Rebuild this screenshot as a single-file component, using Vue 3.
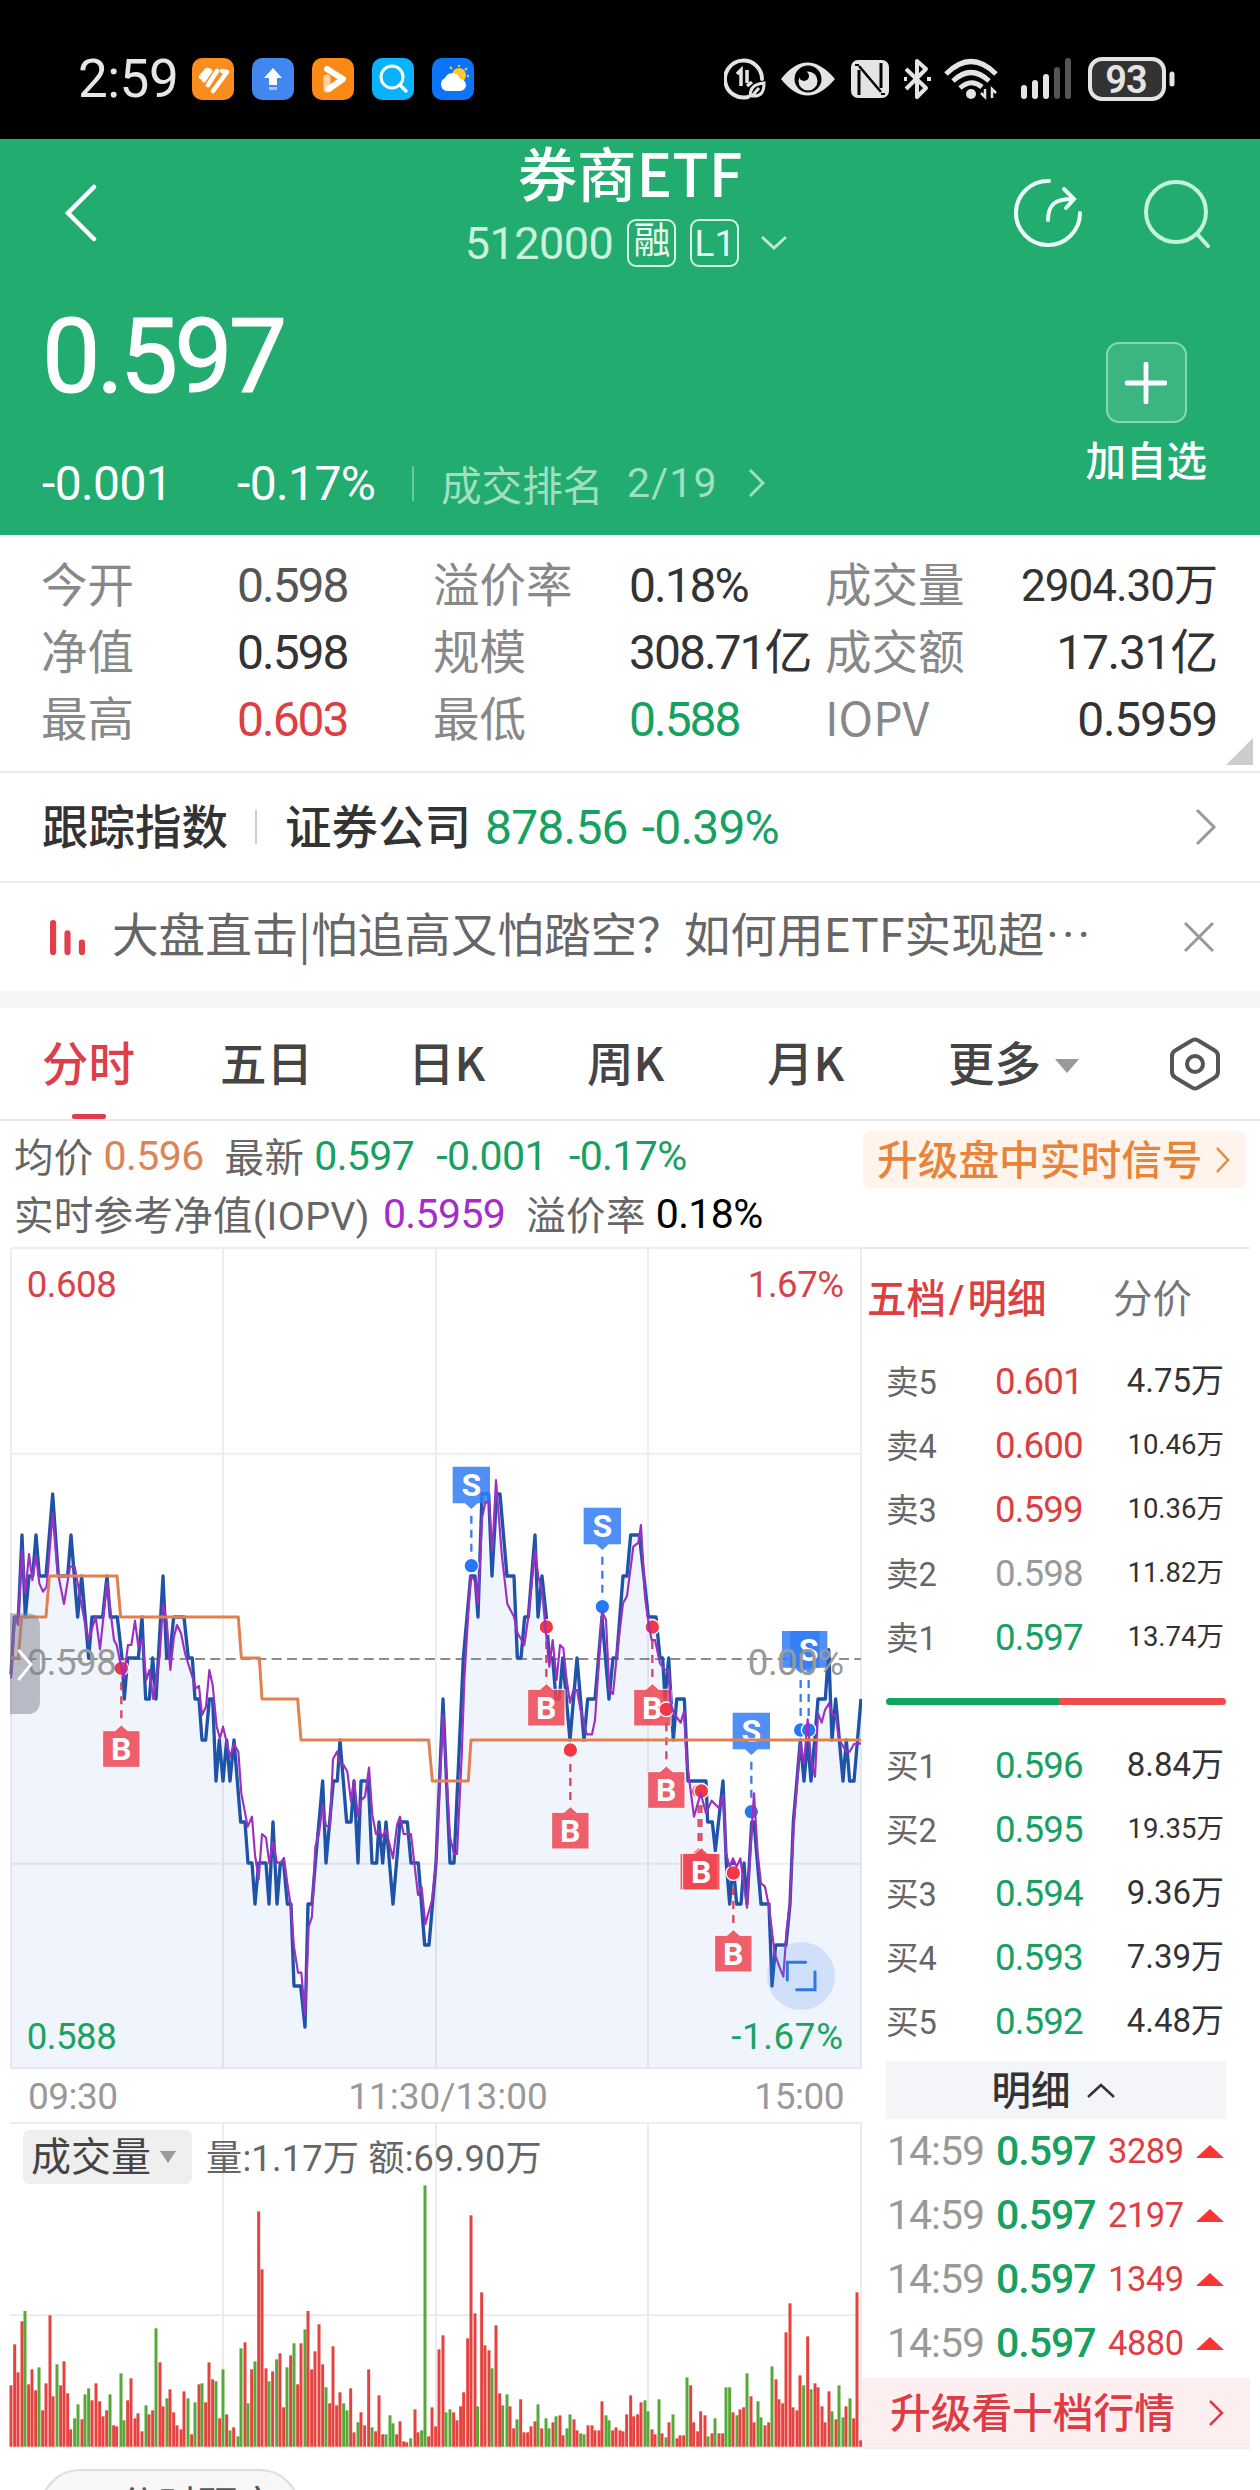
<template>
    <div class="page">
        <div class="status-bar">
            <div class="status-left">
                <span class="clock">2:59</span>
                <svg v-for="app in apps" :key="app" class="app-icon" viewBox="0 0 42 42">
                    <template v-if="app === 'notes'">
                        <rect width="42" height="42" rx="10" fill="#fb8c1e" />
                        <path d="M9 19 L15 12 L18 13 L12 22 M16 27 L25 13 M21 33 L35 14 L30 13" fill="none" stroke="#fff" stroke-width="4.6" stroke-linecap="round" stroke-linejoin="round" />
                    </template>
                    <template v-else-if="app === 'upload'">
                        <rect width="42" height="42" rx="10" fill="#4286ef" />
                        <path d="M21 10 L30 20 H25 V27 H17 V20 H12 Z" fill="#fff" />
                        <rect x="17" y="29" width="8" height="3" fill="#9fc1f8" />
                    </template>
                    <template v-else-if="app === 'video'">
                        <rect width="42" height="42" rx="10" fill="#fb8916" />
                        <path d="M15 31 V20" stroke="#ffd3a8" stroke-width="7" stroke-linecap="round" />
                        <path d="M15 11 L31 21 L17 31" fill="none" stroke="#fff" stroke-width="6" stroke-linecap="round" stroke-linejoin="round" />
                    </template>
                    <template v-else-if="app === 'search'">
                        <rect width="42" height="42" rx="10" fill="#0ab2fb" />
                        <circle cx="20" cy="19" r="11" fill="none" stroke="#fff" stroke-width="3" />
                        <path d="M28 27 L34 33" stroke="#fff" stroke-width="3.5" stroke-linecap="round" />
                    </template>
                    <template v-else>
                        <rect width="42" height="42" rx="10" fill="#0a75fb" />
                        <path d="M27 7 V9 M18 9 L20 11 M35 10 L33 12 M37 18 H35" stroke="#ffc62e" stroke-width="2" />
                        <circle cx="27" cy="17" r="7" fill="#ffc62e" />
                        <path d="M14 33 a7 7 0 0 1 -1 -13 a8 8 0 0 1 15 1 a6 6 0 0 1 0 12 Z" fill="#fff" />
                    </template>
                </svg>
            </div>
            <svg class="status-icons" viewBox="0 0 452 46" fill="none" stroke="#e4e4e4">
                <path d="M24 41 A18.5 18.5 0 1 1 38 23" stroke-width="4" stroke-linecap="round" />
                <path d="M13 18 L17 14 V30 M23 14 V27 M23 30 L28 26" stroke-width="3.5" />
                <path d="M26 41 C26 31 31 28 40 27 C40 36 37 41 28 40 L35 32" stroke-width="3" />
                <path d="M57 23 Q83 -10 111 23 Q83 56 57 23 Z" fill="#e4e4e4" stroke="none" />
                <circle cx="84" cy="23" r="13.5" fill="#000" stroke="none" />
                <circle cx="84" cy="25" r="9.5" fill="#e4e4e4" stroke="none" />
                <circle cx="80" cy="20" r="5" fill="#000" stroke="none" />
                <rect x="127" y="4" width="38" height="38" rx="7" fill="#e4e4e4" stroke="none" />
                <path d="M135 39 V14 M157 32 V7" stroke="#000" stroke-width="3" />
                <path d="M135 10 L157 36" stroke="#000" stroke-width="2.5" />
                <path d="M131 9 L135 9 M157 38 L161 38" stroke="#000" stroke-width="2" />
                <path d="M182 13 L202 32 L193 41 V5 L202 13 L182 33" stroke-width="4" stroke-linejoin="round" />
                <path d="M180 23 h3 M203 23 h4" stroke-width="4" />
                <path d="M222 18 Q247 -7 272 18" stroke-width="5" />
                <path d="M229 25 Q247 8 265 25" stroke-width="5" />
                <path d="M236 32 Q247 22 258 31" stroke-width="5" />
                <circle cx="247" cy="38" r="5" fill="#e4e4e4" stroke="none" />
                <path d="M261 33 V41 L257 37 M268 42 V33 L272 37" stroke-width="2.5" />
                <path d="M300 40 V32 M311 40 V27 M322 40 V21" stroke-width="6" stroke-linecap="round" />
                <path d="M333 40 V14 M344 40 V5" stroke="#555" stroke-width="6" stroke-linecap="round" />
                <rect x="366" y="3" width="74" height="40" rx="12" fill="#333" stroke-width="4" />
                <path d="M448 18 V28" stroke-width="5" stroke-linecap="round" />
                <text x="402" y="37" text-anchor="middle" class="battery">93</text>
            </svg>
        </div>

        <header class="header">
            <div class="nav">
                <svg class="back" viewBox="0 0 34 58"><path d="M30 3 L4 29 L30 55" fill="none" stroke="#fff" stroke-width="4.5" stroke-linecap="round" /></svg>
                <div class="title-block">
                    <div class="title">券商ETF</div>
                    <div class="subtitle">
                        <span class="code">512000</span>
                        <span class="badge">融</span>
                        <span class="badge badge-l1">L1</span>
                        <svg class="sub-arrow" viewBox="0 0 28 16"><path d="M2 2 L14 13 L26 2" fill="none" stroke="#b9ecd3" stroke-width="3" /></svg>
                    </div>
                </div>
                <svg class="share" viewBox="0 0 70 70" fill="none" stroke="#eafff5" stroke-width="4" stroke-linecap="round">
                    <path d="M35 3 A32 32 0 1 0 66 35" />
                    <path d="M34 42 C34 26 42 21 58 21 M50 11 L60 21 L52 30" />
                </svg>
                <svg class="search" viewBox="0 0 70 70" fill="none" stroke="#c3f3dc" stroke-width="4" stroke-linecap="round">
                    <circle cx="34" cy="34" r="30" />
                    <path d="M56 57 L66 68" />
                </svg>
            </div>
            <div class="quote">
                <div>
                    <div class="price">0.597</div>
                    <div class="change-row">
                        <span class="chg">-0.001</span>
                        <span class="pct">-0.17%</span>
                        <span class="bar"></span>
                        <span class="rank">成交排名</span>
                        <span class="rank-no">2/19</span>
                        <svg class="rank-arrow" viewBox="0 0 18 30"><path d="M2 2 L15 15 L2 28" fill="none" stroke="#9fdfc2" stroke-width="3" /></svg>
                    </div>
                </div>
                <div class="add">
                    <div class="add-box">
                        <svg viewBox="0 0 44 44"><path d="M22 2 V42 M2 22 H42" stroke="#fff" stroke-width="5" stroke-linecap="round" /></svg>
                    </div>
                    <div class="add-text">加自选</div>
                </div>
            </div>
        </header>

        <section class="stats">
            <template v-for="s in stats" :key="s.label">
                <span class="label">{{ s.label }}</span>
                <span class="value" :class="[s.color, { right: s.right, small: s.small }]">{{ s.value }}</span>
            </template>
            <i class="corner"></i>
        </section>

        <section class="index-row">
            <span class="name">跟踪指数</span>
            <i class="bar"></i>
            <span class="name">证券公司</span>
            <span class="num green">878.56</span>
            <span class="num green">-0.39%</span>
            <svg class="arrow" viewBox="0 0 22 38"><path d="M2 2 L19 19 L2 36" fill="none" stroke="#999" stroke-width="3" /></svg>
        </section>

        <section class="news-row">
            <svg class="news-icon" viewBox="0 0 34 34"><path d="M3 3 V31 M17 13 V31 M31 22 V31" stroke="#e0404a" stroke-width="6" stroke-linecap="round" /></svg>
            <span class="news-text">大盘直击|怕追高又怕踏空？如何用ETF实现超<span class="dots">···</span></span>
            <svg class="close" viewBox="0 0 32 32"><path d="M2 2 L30 30 M30 2 L2 30" stroke="#999" stroke-width="3" /></svg>
        </section>

        <nav class="tabs">
            <span v-for="(t, i) in tabs" :key="t" class="tab" :class="{ active: i === 0 }">{{ t }}</span>
            <i class="caret"></i>
            <svg class="hex" viewBox="0 0 50 54" fill="none" stroke="#555" stroke-width="4" stroke-linejoin="round">
                <path d="M21 4 Q25 1 29 4 L44 13 Q48 15 48 19 V35 Q48 39 44 41 L29 50 Q25 53 21 50 L6 41 Q2 39 2 35 V19 Q2 15 6 13 Z" />
                <circle cx="25" cy="27" r="8" />
            </svg>
        </nav>

        <section class="info">
            <div class="info-left">
                <div class="info-line">
                    <span>均价</span><b class="orange">0.596</b>
                    <span class="gap">最新</span><b class="green">0.597</b>
                    <b class="green gap2">-0.001</b><b class="green gap2">-0.17%</b>
                </div>
                <div class="info-line">
                    <span>实时参考净值(IOPV)</span><b class="purple">0.5959</b>
                    <span class="gap">溢价率</span><b class="black">0.18%</b>
                </div>
            </div>
            <div class="signal">
                <span>升级盘中实时信号</span>
                <svg viewBox="0 0 16 28"><path d="M2 2 L13 14 L2 26" fill="none" stroke="#e48a45" stroke-width="2.5" /></svg>
            </div>
        </section>

        <main class="main">
            <div class="charts">
                <!-- intraday price chart -->
                <svg class="price-chart" viewBox="0 -1269 2586 2469">
                    <path :d="areaPath" fill="#eff4fd" />
                    <path
                        d="M33 -1266 H2583 M33 -649 H2583 M33 581 H2583 M33 1195 H2583 M33 -1266 V1195 M669 -1266 V1195 M1308 -1266 V1195 M1944 -1266 V1195 M2583 -1266 V1195"
                        stroke="#7b8494" stroke-opacity="0.15" stroke-width="6" fill="none"
                    />
                    <path d="M33 -33 H2583" stroke="#8c8c8c" stroke-width="6" stroke-dasharray="30 16" />
                    <polyline :points="pricePoints" fill="none" stroke="#1e53a8" stroke-width="10" stroke-linejoin="round" />
                    <g v-for="(m, i) in markers" :key="i">
                        <line :x1="m.x" :x2="m.x" :y1="m.y" :y2="m.type === 'S' ? m.y - 160 : m.y + 160" :stroke="m.type === 'S' ? '#3a7fe6' : '#d9455a'" stroke-width="7" stroke-dasharray="24 18" />
                        <g opacity="0.85">
                            <path v-if="m.type === 'S'" :d="`M${m.x - 56} ${m.y - 297} h112 v110 h-37 l-19 17 l-19 -17 h-37 z`" fill="#317df5" />
                            <path v-else :d="`M${m.x - 56} ${m.y + 187} h37 l19 -17 l19 17 h37 v110 h-112 z`" fill="#ee4552" stroke="#fff" stroke-width="3" />
                        </g>
                        <text v-if="!m.under" :x="m.x" :y="m.type === 'S' ? m.y - 208 : m.y + 275" text-anchor="middle" class="marker-text">{{ m.type }}</text>
                        <circle :cx="m.x" :cy="m.y" r="22" :fill="m.type === 'S' ? '#2478f5' : '#f23645'" stroke="#fff" stroke-width="4" />
                    </g>
                    <polyline :points="iopvPoints" fill="none" stroke="#9c30c0" stroke-width="6.5" stroke-linejoin="round" />
                    <polyline :points="avgPoints" fill="none" stroke="#e08250" stroke-width="9" stroke-linejoin="round" />
                    <g class="chart-label">
                        <text x="80" y="-1120" fill="#d8434b">0.608</text>
                        <text x="80" y="15" fill="#999">0.598</text>
                        <text x="80" y="1137" fill="#1aa361">0.588</text>
                        <text x="2531" y="-1120" text-anchor="end" fill="#d8434b">1.67%</text>
                        <text x="2531" y="15" text-anchor="end" fill="#999">0.00%</text>
                        <text x="2531" y="1137" text-anchor="end" fill="#1aa361" class="wide">-1.67%</text>
                    </g>
                    <circle cx="2403" cy="918" r="102" fill="#4285f4" fill-opacity="0.18" />
                    <path d="M2417 877 H2362 V930 M2445 905 V959 H2390" fill="none" stroke="#2f78e3" stroke-width="9" stroke-linecap="round" />
                    <path d="M30 -170 H80 Q120 -170 120 -130 V92 Q120 132 80 132 H30 Z" fill="#7d828d" fill-opacity="0.5" />
                    <path d="M55 -60 L93 -17 L55 30" fill="none" stroke="#fff" stroke-width="9" />
                </svg>
                <div class="axis">
                    <span>09:30</span>
                    <span class="mid">11:30/13:00</span>
                    <span>15:00</span>
                </div>
                <!-- volume chart -->
                <div class="volume">
                    <svg class="volume-chart" viewBox="0 38 2586 978">
                        <path d="M30 40 H2583 M30 618 H2583 M30 1013 H2583 M669 38 V1012 M1308 38 V1012 M1944 38 V1012 M2583 38 V1012" stroke="#ebebeb" stroke-width="6" fill="none" />
                        <rect v-for="b in bars" :key="b.x" :x="b.x - 4.5" :y="b.y" width="9" :height="1012 - b.y" :fill="b.up ? '#e5433f' : '#57a838'" />
                    </svg>
                    <div class="volume-head">
                        <span class="volume-tag">成交量<i></i></span>
                        <span class="volume-text">量:1.17万 额:69.90万</span>
                    </div>
                </div>
            </div>

            <aside class="side">
                <div class="side-tabs">
                    <span class="red">五档<span class="slash">/</span>明细</span>
                    <span>分价</span>
                </div>
                <div v-for="o in asks" :key="o[0]" class="order">
                    <span>{{ o[0] }}</span>
                    <b :class="o[3]">{{ o[1] }}</b>
                    <em :class="{ long: o[2].length > 5 }">{{ o[2] }}</em>
                </div>
                <div class="ratio"><i></i></div>
                <div v-for="o in bids" :key="o[0]" class="order">
                    <span>{{ o[0] }}</span>
                    <b :class="o[3]">{{ o[1] }}</b>
                    <em :class="{ long: o[2].length > 5 }">{{ o[2] }}</em>
                </div>
                <div class="detail-head">
                    <span>明细</span>
                    <svg viewBox="0 0 28 15"><path d="M1 14 L14 2 L27 14" fill="none" stroke="#333" stroke-width="2.5" /></svg>
                </div>
                <div v-for="(d, i) in details" :key="i" class="deal">
                    <span>14:59</span>
                    <b>0.597</b>
                    <em>{{ d }}</em>
                    <i></i>
                </div>
                <div class="upgrade">
                    <span>升级看十档行情</span>
                    <svg viewBox="0 0 16 28"><path d="M2 2 L14 14 L2 26" fill="none" stroke="#dc3c46" stroke-width="2.5" /></svg>
                </div>
            </aside>
        </main>

        <div class="bottom">
            <div class="pill">分时研究</div>
        </div>
    </div>
</template>

<script setup>
const apps = ['notes', 'upload', 'video', 'search', 'weather'];

const stats = [
    { label: '今开', value: '0.598', color: 'gray' },
    { label: '溢价率', value: '0.18%' },
    { label: '成交量', value: '2904.30万', right: true, small: true },
    { label: '净值', value: '0.598' },
    { label: '规模', value: '308.71亿' },
    { label: '成交额', value: '17.31亿', right: true },
    { label: '最高', value: '0.603', color: 'red' },
    { label: '最低', value: '0.588', color: 'green' },
    { label: 'IOPV', value: '0.5959', right: true },
];

const tabs = ['分时', '五日', '日K', '周K', '月K', '更多'];

const asks = [
    ['卖5', '0.601', '4.75万', 'red'],
    ['卖4', '0.600', '10.46万', 'red'],
    ['卖3', '0.599', '10.36万', 'red'],
    ['卖2', '0.598', '11.82万', 'flat'],
    ['卖1', '0.597', '13.74万', 'green'],
];

const bids = [
    ['买1', '0.596', '8.84万', 'green'],
    ['买2', '0.595', '19.35万', 'green'],
    ['买3', '0.594', '9.36万', 'green'],
    ['买4', '0.593', '7.39万', 'green'],
    ['买5', '0.592', '4.48万', 'green'],
];

const details = [3289, 2197, 1349, 4880];

// x, price offset from 0.598 in steps of 0.001
const price = `33,-.4 43,1 55,1 66,3 76,1 87,2 98,2 108,3 118,2 138,2 158,4 175,2 203,2 213,3 233,1 245,2 266,0 276,1 308,1
321,2 331,1 352,1 366,0 373,-1 383,0 415,0 426,1 437,-1 448,-1 458,0 468,-1 489,2 500,0 509,0 521,1 552,1 565,0 577,0 585,-1
597,-1 606,-2 617,-2 628,-1 638,-1 648,-3 658,-2 669,-3 680,-2 690,-3 702,-2 722,-4 735,-4 744,-5 756,-5 765,-6 776,-5
798,-5 807,-6 819,-4 831,-6 841,-5 851,-5 862,-6 873,-6 882,-8 902,-8 915,-9 924,-6 936,-6 946,-5 968,-3 978,-5 1000,-3
1012,-3 1020,-2 1040,-4 1053,-4 1062,-3 1074,-5 1083,-3 1105,-3 1116,-5 1130,-5 1137,-4 1148,-5 1158,-4 1179,-6 1200,-4
1222,-4 1233,-5 1255,-5 1274,-7 1287,-7 1308,-5 1329,-1 1350,-5 1362,-5 1390,0 1412,2 1425,2 1434,1 1446,4 1466,4 1476,2
1490,4 1500,4 1521,2 1542,2 1552,0 1563,0 1574,1 1585,1 1605,3 1614,1 1626,2 1639,1 1648,0 1658,0 1668,-1 1678,-1 1688,0
1710,-2 1731,0 1752,-2 1763,-1 1785,-1 1806,1 1827,-1 1839,0 1850,0 1869,2 1881,2 1892,3 1918,3 1945,1 1968,1 1980,0 1988,0
1995,-1 2006,0 2020,-2 2030,-1 2053,-1 2064,-3 2118,-3 2123,-4 2137,-4 2146,-4.7 2169,-3 2179,-5 2189,-6 2199,-5 2210,-6
2223,-6 2232,-5 2241,-6 2255,-4 2262,-4 2283,-6 2307,-6 2316,-8 2327,-7 2358,-7 2370,-6 2380,-4 2401,-2 2412,-3 2423,-2
2433,-3 2444,-2 2454,-1 2476,-1 2486,.2 2496,-2 2507,-1 2529,-3 2539,-2 2549,-3 2562,-3 2583,-1`;

const avg = `33,0 55,0 65,1 138,1 148,2 351,2 362,1 715,1 724,0 778,0 786,-1 893,-1 903,-2 1286,-2 1297,-3 1405,-3 1413,-2 2583,-2`;

// already in chart units
const iopvPoints = `33,25 45,-160 54,-135 66,-360 76,-230 87,-348 97,-270 108,-345 118,-260 129,-235 140,-250 158,-470 172,-300
192,-198 210,-310 224,-310 235,-250 255,-140 266,-90 287,-160 300,-62 321,-260 342,-90 350,-75 371,25 384,-75 394,-75
405,-148 415,-70 427,-90 439,30 448,0 460,87 479,-40 489,-198 500,-150 511,0 522,-100 531,-135 543,-110 555,-50 580,30
587,55 597,48 606,135 618,110 628,0 638,45 650,170 660,205 669,170 690,260 702,222 715,245 724,370 743,470 756,440 765,555
776,628 786,492 798,503 808,580 819,517 831,578 842,578 852,564 862,640 872,705 882,830 894,908 904,908 915,1035 926,770
936,740 946,530 957,490 968,405 978,468 990,468 999,268 1011,245 1020,280 1031,285 1042,305 1053,395 1062,330 1074,440
1084,390 1095,380 1107,293 1117,435 1128,492 1137,482 1148,500 1158,480 1179,565 1191,465 1200,440 1211,492 1233,492
1254,675 1265,652 1276,763 1296,690 1308,580 1329,135 1350,500 1362,552 1371,552 1385,260 1393,30 1403,-140 1412,-280
1424,-270 1434,-198 1446,-455 1456,-503 1467,-503 1477,-355 1488,-570 1505,-350 1522,-198 1542,-160 1553,-110 1573,-75
1585,-160 1605,-360 1615,-280 1626,-240 1637,-120 1648,-10 1658,-90 1670,30 1680,-75 1690,-65 1700,30 1710,98 1720,60
1731,60 1742,120 1760,193 1776,193 1785,150 1795,0 1806,-175 1818,-150 1828,60 1839,72 1850,-40 1869,-200 1881,-222
1900,-370 1915,-382 1923,-435 1935,-220 1947,-130 1955,-90 1965,-90 1980,-20 1995,0 2006,0 2012,100 2022,130 2042,158
2052,125 2060,270 2082,440 2102,370 2118,430 2135,392 2157,415 2169,375 2178,550 2189,590 2199,565 2210,590 2221,565
2241,713 2250,560 2262,370 2273,550 2283,640 2295,650 2307,710 2324,850 2338,890 2350,920 2360,780 2370,700 2380,480
2401,220 2412,280 2423,148 2433,270 2445,320 2454,130 2465,158 2475,120 2487,100 2498,135 2507,135 2518,210 2530,230
2539,245 2549,245 2562,222 2583,220`;

// x, top and direction of every one-minute bar
const volume = `33,828r 44,705r 54,789r 66,636r 75,605g 86,825r 96,780r 107,843r 117,774g 128,903r 138,822r 150,618r 159,861r
171,765g 182,828r 192,756r 203,852r 212,960r 224,927g 234,885g 246,930r 255,855g 266,837g 276,873r 288,822r 299,876r
309,921r 320,903r 330,855g 341,948r 350,951r 363,792g 372,933g 383,873r 393,807r 405,927r 414,912r 426,966r 438,888g
447,915r 458,903r 468,657g 480,759r 489,891r 501,867g 510,840r 521,909r 531,948r 543,960r 552,846r 564,867g 575,975r
585,879g 597,825r 606,822g 617,879r 627,759r 638,810r 648,816g 659,927r 669,780g 680,915r 690,963g 701,954r 714,981g
723,717g 735,699r 744,882g 755,780r 765,756g 776,306r 786,480r 798,777r 807,816g 818,786r 830,750g 840,732r 851,894r
861,774g 872,738r 882,702g 893,825r 903,702r 915,660g 924,605r 935,780r 945,726r 957,645r 968,765r 978,834g 989,882r
999,711r 1010,888r 1020,849r 1031,882g 1041,903g 1052,837r 1062,969r 1074,939g 1083,909r 1094,948r 1106,780r 1116,954g
1127,966r 1137,858r 1148,975r 1158,975g 1170,918g 1179,942g 1190,975r 1200,936r 1211,996r 1220,999r 1232,987g 1245,900r
1254,969r 1265,963g 1275,228g 1286,981r 1296,894r 1307,951r 1317,720r 1329,678r 1338,909g 1350,900g 1361,909r 1371,933r
1382,891r 1391,849r 1403,687r 1413,318r 1425,612r 1433,891g 1445,549r 1455,708r 1467,723r 1476,777g 1488,648r 1499,852r
1508,888g 1521,855g 1530,891r 1541,957r 1551,930g 1562,870r 1572,969r 1583,969r 1593,951r 1605,936r 1614,885g 1625,957r
1638,927g 1647,957g 1659,939r 1668,921g 1680,918r 1689,978r 1701,957g 1710,915g 1722,930r 1731,963r 1742,972g 1752,975g
1764,948r 1776,948r 1785,963r 1797,963r 1806,876r 1818,918g 1827,933g 1838,963r 1848,954r 1860,963r 1869,966r 1880,915r
1892,858r 1901,921r 1913,915r 1923,879r 1935,873g 1944,906g 1956,960r 1965,975r 1977,870g 1986,972r 1998,984g 2007,939r
2019,915g 2031,987r 2040,978r 2051,978r 2061,804g 2072,828r 2081,939r 2093,966r 2102,906r 2115,918r 2124,981g 2136,972r
2145,927g 2157,972r 2168,972r 2178,834g 2189,834g 2199,909r 2211,918g 2220,900r 2231,894r 2241,792g 2253,861r 2262,939r
2274,876g 2283,924g 2295,948r 2306,939r 2316,771g 2328,810r 2337,870r 2348,882r 2358,669r 2370,582r 2379,894r 2391,903r
2400,798r 2411,828g 2423,681r 2433,840g 2445,822r 2454,834r 2466,891r 2475,939r 2487,846r 2496,906g 2508,930r 2517,828g
2529,924g 2538,891r 2550,867g 2561,927r 2571,549r 2582,993r`;

const markers = [
    { type: 'B', x: 364, y: -5 },
    { type: 'S', x: 1414, y: -313 },
    { type: 'B', x: 1639, y: -129 },
    { type: 'B', x: 1711, y: 240 },
    { type: 'S', x: 1807, y: -190 },
    { type: 'B', x: 1957, y: -129 },
    { type: 'B', x: 1999, y: 118 },
    { type: 'B', x: 2096, y: 363, under: true },
    { type: 'B', x: 2104, y: 363 },
    { type: 'B', x: 2200, y: 609 },
    { type: 'S', x: 2254, y: 425 },
    { type: 'S', x: 2402, y: 180, under: true },
    { type: 'S', x: 2426, y: 180 },
];

const toPoints = (data) =>
    data
        .split(/\s+/)
        .map((item) => {
            const [x, level] = item.split(',').map(Number);
            return `${x},${(-36 - level * 123).toFixed(0)}`;
        })
        .join(' ');

const pricePoints = toPoints(price);
const avgPoints = toPoints(avg);
const areaPath = `M33 1195 L${pricePoints} L2583 1195 Z`;

const bars = volume.split(/\s+/).map((item) => {
    const [x, rest] = item.split(',');
    return { x: Number(x), y: parseInt(rest), up: rest.endsWith('r') };
});
</script>

<style>
body {
    margin: 0;
    background: #fff;
}
</style>

<style scoped>
.page {
    width: 1260px;
    height: 2490px;
    overflow: hidden;
    background: #fff;
    color: #333;
    font-family: 'Roboto', 'Noto Sans CJK SC', sans-serif;
}

svg {
    display: block;
    flex: none;
}

b,
em,
i {
    font-style: normal;
    font-weight: 400;
}

.red {
    color: #dc3f42;
}

.green {
    color: #17a160;
}

/* status bar */
.status-bar {
    height: 139px;
    box-sizing: border-box;
    padding: 18px 84px 0 78px;
    background: #000;
    display: flex;
    justify-content: space-between;
    align-items: center;
}

.status-left {
    display: flex;
    align-items: center;
    gap: 18px;
}

.clock {
    width: 96px;
    white-space: nowrap;
    font-size: 53px;
    line-height: 60px;
    letter-spacing: -0.5px;
    color: #e6e6e6;
}

.app-icon {
    width: 42px;
    height: 42px;
}

.status-icons {
    width: 452px;
    height: 46px;
}

.battery {
    font-size: 38px;
    font-weight: 600;
    letter-spacing: -1px;
    fill: #e4e4e4;
    stroke: none;
}

/* green header */
.header {
    height: 396px;
    background: #22ac6f;
    color: #fff;
}

.nav {
    height: 148px;
    padding: 0 48px 0 64px;
    display: flex;
    align-items: center;
}

.back {
    width: 34px;
    height: 58px;
}

.title-block {
    align-self: flex-start;
    flex: 1;
    margin-left: 148px;
    display: flex;
    flex-direction: column;
    align-items: center;
}

.title {
    font-family: 'Noto Sans CJK SC', sans-serif;
    font-size: 59.5px;
    font-weight: 500;
    line-height: 64px;
}

.subtitle {
    display: flex;
    align-items: center;
    height: 50px;
    margin-top: 15px;
    margin-right: 7px;
}

.code {
    font-size: 45px;
    letter-spacing: -0.5px;
    color: #c9f2df;
    margin-right: 14px;
}

.badge {
    box-sizing: border-box;
    width: 49px;
    height: 48px;
    margin-right: 14px;
    border: 2px solid #d7f5e8;
    border-radius: 9px;
    font-size: 37px;
    line-height: 42px;
    text-align: center;
    color: #eafaf3;
}

.badge-l1 {
    line-height: 45px;
}

.sub-arrow {
    width: 28px;
    height: 16px;
    margin-left: 7px;
}

.share {
    width: 70px;
    height: 70px;
    margin-right: 58px;
}

.search {
    width: 70px;
    height: 70px;
}

.quote {
    display: flex;
    justify-content: space-between;
    padding: 0 53px 0 42px;
}

.price {
    margin-top: 20px;
    height: 100px;
    font-size: 104px;
    line-height: 100px;
    letter-spacing: -4px;
    -webkit-text-stroke: 1px #fff;
}

.change-row {
    display: flex;
    align-items: center;
    height: 40px;
    margin-top: 56px;
    white-space: nowrap;
}

.chg,
.pct {
    font-size: 48px;
    letter-spacing: -0.6px;
}

.chg {
    width: 195px;
}

.pct {
    width: 175px;
}

.change-row .bar {
    width: 2px;
    height: 35px;
    background: #6bc9a0;
    margin-right: 27px;
}

.rank {
    font-size: 40.6px;
    color: #9fdfc2;
    width: 186px;
}

.rank-no {
    font-size: 41px;
    letter-spacing: 1.2px;
    color: #9fdfc2;
    width: 121px;
}

.rank-arrow {
    width: 18px;
    height: 30px;
}

.add {
    margin-top: 55px;
    display: flex;
    flex-direction: column;
    align-items: center;
}

.add-box {
    box-sizing: border-box;
    width: 81px;
    height: 81px;
    border: 2px solid #86d8b1;
    border-radius: 13px;
    background: #3bb680;
    display: flex;
    align-items: center;
    justify-content: center;
}

.add-box svg {
    width: 42px;
    height: 42px;
}

.add-text {
    margin-top: 15px;
    font-size: 40.5px;
    font-weight: 500;
    line-height: 48px;
}

/* stats */
.stats {
    position: relative;
    box-sizing: border-box;
    height: 238px;
    padding: 16px 43px 0 41px;
    border-bottom: 2px solid #ebebeb;
    display: grid;
    grid-template-columns: 196px 196px 196px 196px 150px 1fr;
    grid-auto-rows: 67px;
    white-space: nowrap;
}

.label {
    font-family: 'Noto Sans CJK SC', sans-serif;
    font-size: 46.5px;
    line-height: 62px;
    color: #888;
}

.value {
    font-size: 48px;
    line-height: 70px;
    letter-spacing: -2px;
}

.value.gray {
    color: #555;
}

.value.red {
    color: #dc3f42;
}

.value.green {
    color: #17a160;
}

.value.right {
    text-align: right;
    letter-spacing: -1.3px;
}

.value.small {
    font-size: 44px;
    letter-spacing: -1px;
}

.corner {
    position: absolute;
    right: 7px;
    bottom: 6px;
    border-left: 27px solid transparent;
    border-bottom: 27px solid #ccc;
}

.index-row {
    box-sizing: border-box;
    height: 110px;
    padding: 0 43px 0 42px;
    border-bottom: 2px solid #ebebeb;
    display: flex;
    align-items: center;
    font-size: 46.5px;
    font-weight: 500;
    white-space: nowrap;
}

.index-row .name {
    margin-top: -7px;
}

.index-row .bar {
    width: 2px;
    height: 34px;
    margin: 0 28px 0 27px;
    background: #ccc;
}

.num {
    font-size: 48px;
    letter-spacing: -0.8px;
    margin-left: 14px;
    font-weight: 400;
}

.arrow {
    width: 22px;
    height: 38px;
    margin-left: auto;
}

.news-row {
    height: 108px;
    padding: 0 45px 0 50px;
    display: flex;
    align-items: center;
    border-bottom: 17px solid #f6f6f6;
    font-family: 'Noto Sans CJK SC', sans-serif;
}

.news-icon {
    width: 35px;
    height: 35px;
    margin-right: 27px;
}

.news-text {
    font-size: 46.6px;
    line-height: 60px;
    margin-top: -6px;
    color: #666;
    white-space: nowrap;
}

.dots {
    margin-left: 2px;
    font-family: 'Roboto', sans-serif;
    font-size: 48px;
    letter-spacing: 3px;
}

.close {
    width: 32px;
    height: 32px;
    margin-left: auto;
}

/* tabs */
.tabs {
    position: relative;
    box-sizing: border-box;
    height: 113px;
    padding: 0 40px 0 42px;
    border-bottom: 2px solid #e8e8e8;
    display: grid;
    grid-template-columns: 178px 188px 179px 180px 181px 107px 1fr 50px;
    align-items: center;
    font-family: 'Noto Sans CJK SC', sans-serif;
    font-size: 46.5px;
    font-weight: 500;
    color: #444;
}

.tab {
    line-height: 111px;
    height: 111px;
    margin-top: -6px;
}

.tab.active {
    color: #dc3f4b;
}

.tab.active::after {
    content: '';
    position: absolute;
    left: 72px;
    bottom: 0;
    width: 34px;
    height: 5px;
    border-radius: 2px;
    background: #dc3f4b;
}

.caret {
    width: 0;
    height: 0;
    border: 12px solid transparent;
    border-top: 14px solid #999;
    border-bottom: 0;
    margin-top: 4px;
}

.hex {
    width: 50px;
    height: 54px;
}

.info {
    height: 126px;
    display: flex;
    justify-content: space-between;
    padding: 0 14px 0 14px;
}

.info-left {
    padding-top: 6px;
}

.info-line {
    height: 58px;
    display: flex;
    align-items: center;
    font-size: 39.5px;
    color: #666;
    white-space: nowrap;
}

.info-line span {
    margin-top: -4px;
    letter-spacing: 0.3px;
}

.info-line b {
    font-size: 41px;
    letter-spacing: -0.6px;
    margin-left: 10px;
}

.info-line .gap {
    margin-left: 21px;
}

.info-line .gap2 {
    margin-left: 22px;
}

.info-line .orange {
    color: #dc8455;
}

.info-line .green {
    color: #17a160;
}

.info-line .purple {
    color: #a52cc8;
    margin-left: 13px;
}

.info-line .black {
    color: #000;
}

.signal {
    box-sizing: border-box;
    width: 383px;
    height: 57px;
    margin-top: 10px;
    padding: 0 15px 0 14px;
    border-radius: 8px;
    background: #fef4ec;
    display: flex;
    align-items: center;
    justify-content: space-between;
    font-size: 40.7px;
    font-weight: 500;
    color: #e8843a;
    white-space: nowrap;
}

.signal span {
    margin-top: -5px;
}

.signal svg {
    width: 16px;
    height: 28px;
}

/* charts */
.main {
    display: flex;
    height: 1202px;
}

.charts {
    width: 862px;
}

.price-chart {
    width: 862px;
    height: 823px;
}

.chart-label text {
    font-size: 110px;
    letter-spacing: -1.5px;
}

.chart-label .wide {
    letter-spacing: 2px;
}

.marker-text {
    font-size: 96px;
    font-weight: 700;
    fill: #fff;
}

.axis {
    height: 52px;
    box-sizing: border-box;
    padding: 0 18px 0 28px;
    display: flex;
    justify-content: space-between;
    align-items: center;
    font-size: 37px;
    letter-spacing: -0.5px;
    color: #999;
}

.axis .mid {
    margin-left: 24px;
    letter-spacing: 0;
}

.volume {
    position: relative;
}

.volume-chart {
    width: 862px;
    height: 326px;
}

.volume-head {
    position: absolute;
    left: 23px;
    top: 8px;
    display: flex;
    align-items: center;
    gap: 14px;
    font-size: 36.2px;
    color: #666;
    white-space: nowrap;
}

.volume-text {
    margin-top: -4px;
    letter-spacing: 0.2px;
}

.volume-tag {
    box-sizing: border-box;
    width: 169px;
    height: 54px;
    padding-left: 8px;
    border-radius: 6px;
    background: #efefef;
    font-size: 40px;
    line-height: 53px;
    color: #444;
    display: flex;
    align-items: center;
}

.volume-tag i {
    margin-left: 9px;
    border: 8.5px solid transparent;
    border-top: 12px solid #999;
    border-bottom: 0;
}

.side {
    box-sizing: border-box;
    width: 388px;
    border-top: 2px solid #ebebeb;
    border-bottom: 2px solid #eee;
}

.side-tabs {
    height: 100px;
    box-sizing: border-box;
    padding: 0 58px 8px 5px;
    display: flex;
    justify-content: space-between;
    align-items: center;
    font-size: 39.5px;
    color: #777;
}

.side-tabs .red {
    font-weight: 500;
}

.slash {
    margin: 0 3px;
}

.order {
    height: 64px;
    padding: 0 26px 0 24px;
    display: grid;
    grid-template-columns: 109px 1fr auto;
    align-items: center;
    white-space: nowrap;
}

.order span {
    font-size: 32.5px;
    margin-top: -3px;
    color: #666;
}

.order b {
    font-size: 36.7px;
    letter-spacing: -0.9px;
}

.order em {
    font-size: 33px;
    line-height: 60px;
}

.order em.long {
    font-size: 27.5px;
}

.flat {
    color: #999;
}

.ratio {
    height: 64px;
    margin: 0 24px;
    display: flex;
    align-items: center;
}

.ratio::before,
.ratio i {
    content: '';
    width: 173px;
    height: 7px;
    border-radius: 4px 0 0 4px;
    background: #0ea55e;
}

.ratio i {
    width: 167px;
    border-radius: 0 4px 4px 0;
    background: #ef4c4c;
}

.detail-head {
    box-sizing: border-box;
    height: 58px;
    margin: 8px 24px 0;
    padding-right: 6px;
    background: #f3f5f9;
    display: flex;
    align-items: center;
    justify-content: center;
    gap: 16px;
    font-size: 39.5px;
    font-weight: 500;
}

.detail-head span {
    margin-top: -5px;
}

.detail-head svg {
    width: 28px;
    height: 15px;
}

.deal {
    height: 64px;
    padding: 0 26px 0 25px;
    display: grid;
    grid-template-columns: 109px 112px 75px 1fr;
    align-items: center;
}

.deal span {
    font-size: 41px;
    letter-spacing: -1px;
    color: #999;
}

.deal b {
    font-size: 41px;
    font-weight: 500;
    letter-spacing: -1px;
    color: #17a160;
}

.deal em {
    font-size: 34.5px;
    letter-spacing: -0.5px;
    color: #dc3f46;
}

.deal i {
    justify-self: end;
    border: 14px solid transparent;
    border-bottom: 13px solid #fa3534;
    border-top: 0;
}

.upgrade {
    height: 69px;
    margin-top: 3px;
    padding: 0 26px 0 28px;
    background: #fdeeef;
    display: flex;
    align-items: center;
    justify-content: space-between;
    font-size: 40.7px;
    font-weight: 500;
    color: #dc3c46;
}

.upgrade span {
    margin-top: -5px;
}

.upgrade svg {
    width: 16px;
    height: 28px;
}

.bottom {
    padding: 20px 40px 0;
}

.pill {
    box-sizing: border-box;
    width: 260px;
    height: 80px;
    padding-left: 76px;
    border: 2px solid #ddd;
    border-radius: 40px;
    background: #f7f7f7;
    font-size: 40px;
    line-height: 71px;
    color: #555;
}
</style>
